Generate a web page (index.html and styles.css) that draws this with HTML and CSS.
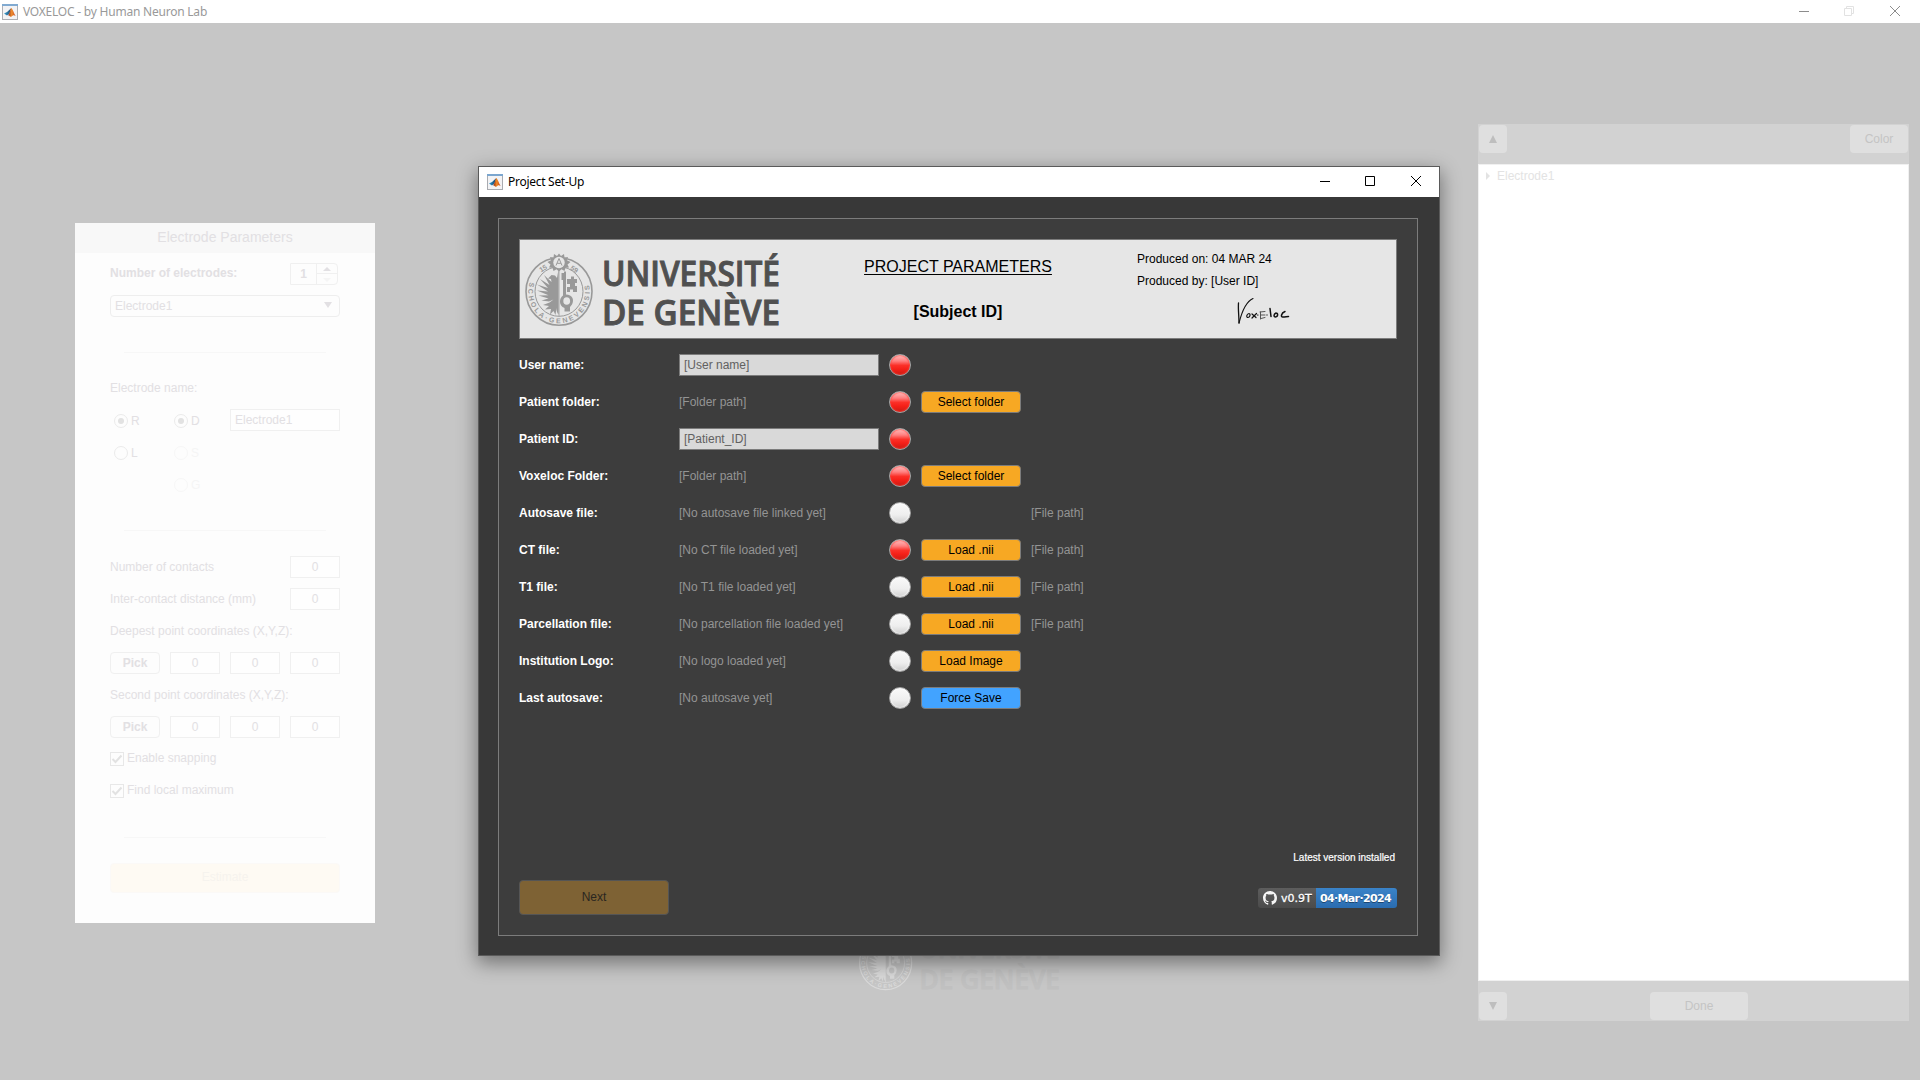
FILE: index.html
```html
<!DOCTYPE html>
<html lang="en">
<head>
<meta charset="utf-8">
<title>VOXELOC - by Human Neuron Lab</title>
<link rel="stylesheet" href="styles.css">
</head>
<body>
<svg width="0" height="0" class="defs">
  <defs>
    <linearGradient id="blueLeft"><stop offset="0" stop-color="#2b9bd0"/><stop offset="1" stop-color="#1d3f66"/></linearGradient>
    <linearGradient id="orangeRight"><stop offset="0" stop-color="#8a1f10"/><stop offset=".5" stop-color="#f08a24"/><stop offset="1" stop-color="#c33a12"/></linearGradient>
    <symbol id="matlab" viewBox="0 0 16 16">
      <rect x=".5" y=".5" width="15" height="15" fill="#f3f3f5" stroke="#a9abb0"/>
      <rect x="0" y="0" width="16" height="2" fill="#7ba6cf"/>
      <path d="M2 9.5 5 8 8 5.2 9.2 4.2 7.5 9.5 5 11.5Z" fill="url(#blueLeft)"/>
      <path d="M9.2 4C10.3 4.2 11.7 8.800 13.600 12 12 10.700 11 10.800 9.400 12.700 8.700 13.200 7.600 11.500 6 11.200 7.800 9.800 8.200 5.500 9.200 4Z" fill="url(#orangeRight)"/>
    </symbol>
    <path id="ringText" d="M5.700 31A30.800 31.500 0 1 0 64.300 31"/>
    <symbol id="unige" viewBox="0 0 256 76">
      <g class="seal" fill="none" stroke="currentColor">
        <ellipse cx="35" cy="40.500" rx="33" ry="33.800" stroke-width="1.600"/>
        <ellipse cx="35" cy="40.500" rx="24" ry="24.800" stroke-width="1"/>
        <g fill="currentColor" stroke="none">
          <path d="M34.600 18V63.500C33 62 32.500 60 32.500 57L31.500 64 29.500 60 26 63.500 27 58 21 58.500 25 55 19 54 25.500 51.500 29.500 48.500 25 50.500 17.500 49.500 24.500 47.500 14.500 44.500 24.500 44.300 13 39.500 24 40.500 13 33.500 24 37 16 28 25.500 34 20 24 27.500 31 27 28 24 27.500 27.500 24 31 24.500 33 27Z"/>
          <path d="M37.500 22H40V20.500H42V43.500C48.500 43.500 50.500 49 48 53.500L46 56V60.500H40.500V57C34.500 55 35 47 39 44.500V29H37.500Z"/>
          <path d="M43 28H47V25.500H50V28H53V32H51V35H53V41H49V38.500H46V41H43V36H46V33H43Z"/>
        </g>
        <ellipse cx="42.700" cy="50" rx="3.400" ry="3.800" fill="var(--seal-bg)" stroke="none"/>
        <path d="M35 17V65" stroke-width=".8"/>
        <path d="M35 2.500 37 5 40 3 40.500 6.500 44 6 43 9.300 46.500 11 43.500 13.500 45 16.500 41.500 16.800 40.500 20 37.500 18.200 35 20.500 32.500 18.200 29.500 20 28.500 16.800 25 16.500 26.500 13.500 23.500 11 27 9.300 26 6 29.500 6.500 30 3 33 5Z" fill="currentColor" stroke="none"/>
        <circle cx="35" cy="11.500" r="5.700" fill="var(--seal-bg)" stroke="none"/>
        <path d="M32 14.500 35 7.500 38 14.500M33.200 12.300H36.800" stroke-width="1"/>
      </g>
      <g class="seal-text" fill="currentColor">
        <text transform="rotate(-30 19 18)" x="15.500" y="20">15</text>
        <text transform="rotate(32 50 18)" x="46.500" y="20.500">59</text>
        <text><textPath href="#ringText" textLength="114">SCHOLA·GENEVENSIS</textPath></text>
      </g>
      <g class="logo-words">
        <text x="78" y="34.800" textLength="178" lengthAdjust="spacingAndGlyphs">UNIVERSITÉ</text>
        <text x="78" y="73.800" textLength="178" lengthAdjust="spacingAndGlyphs">DE GENÈVE</text>
      </g>
    </symbol>
  </defs>
</svg>

<header class="app-bar">
  <svg class="app-icon" width="16" height="16"><use href="#matlab"/></svg>
  <span class="app-title">VOXELOC - by Human Neuron Lab</span>
  <svg class="app-controls" width="102" height="20" fill="none" stroke="#8c8c8c">
    <path d="M0 9.500H10"/>
    <path d="M45.500 6.500H52.500V13.500H45.500ZM47.500 6.500V4.500H54.500V11.500H52.500" stroke="#e2e2e2"/>
    <path d="M91 4 101 14M101 4 91 14"/>
  </svg>
</header>

<main class="workspace">
  <section class="electrode-panel">
    <h2>Electrode Parameters</h2>
    <div class="fields">
      <div class="line"><b class="count-label">Number of electrodes:</b>
        <div class="spinner"><b>1</b><span class="steps"><i class="up"></i><i class="down"></i></span></div></div>
      <div class="select"><span>Electrode1</span><i></i></div>
      <hr class="after-select">
      <div class="line name-label">Electrode name:</div>
      <div class="name-grid">
        <label class="radio on"><i></i>R</label><label class="radio on"><i></i>D</label><div class="box name">Electrode1</div>
        <label class="radio"><i></i>L</label><label class="radio off"><i></i>S</label><span></span>
        <span></span><label class="radio off"><i></i>G</label><span></span>
      </div>
      <hr class="after-name">
      <div class="line">Number of contacts<div class="box">0</div></div>
      <div class="line">Inter-contact distance (mm)<div class="box">0</div></div>
      <div class="line">Deepest point coordinates (X,Y,Z):</div>
      <div class="line"><div class="pick">Pick</div><div class="box">0</div><div class="box">0</div><div class="box">0</div></div>
      <div class="line">Second point coordinates (X,Y,Z):</div>
      <div class="line"><div class="pick">Pick</div><div class="box">0</div><div class="box">0</div><div class="box">0</div></div>
      <label class="check"><svg width="14" height="14"><rect x=".5" y=".5" width="13" height="13"/><path d="M2.500 7 5.500 10 11.500 3.500"/></svg><span>Enable snapping</span></label>
      <label class="check"><svg width="14" height="14"><rect x=".5" y=".5" width="13" height="13"/><path d="M2.500 7 5.500 10 11.500 3.500"/></svg><span>Find local maximum</span></label>
      <hr class="after-checks">
      <div class="estimate">Estimate</div>
    </div>
  </section>

  <section class="tree-panel">
    <div class="tree-bar top"><div class="ghost square"><i class="up"></i></div><div class="ghost color">Color</div></div>
    <div class="tree"><i></i>Electrode1</div>
    <div class="tree-bar bottom"><div class="ghost square"><i class="down"></i></div><div class="ghost done">Done</div><span></span></div>
  </section>
</main>

<svg class="backdrop-logo" width="202" height="60" preserveAspectRatio="none"><use href="#unige"/></svg>

<section class="dialog">
  <header class="dialog-bar">
    <svg width="16" height="16"><use href="#matlab"/></svg>
    <span class="dialog-title">Project Set-Up</span>
    <svg class="dialog-controls" width="104" height="12" fill="none" stroke="#000">
      <path d="M0 6.500H10M45.500 1.500H54.500V10.500H45.500ZM91 1 101 11M101 1 91 11"/>
    </svg>
  </header>
  <div class="dialog-body">
    <div class="frame">
      <div class="banner">
        <svg class="logo" width="256" height="76"><use href="#unige"/></svg>
        <div class="heading"><u>PROJECT PARAMETERS</u><b>[Subject ID]</b></div>
        <div class="meta">
          <span>Produced on: 04 MAR 24</span>
          <span>Produced by: [User ID]</span>
          <svg class="signature" width="58" height="30" fill="none" stroke="#111" stroke-linecap="round">
            <path d="M3.500 6C3 12 4 19 4 26" stroke-width="1.300"/><path d="M4 26C6 18 10 5 18 1.500" stroke-width="1.100"/>
            <path d="M14 16.500C11.500 17 11 20.500 13 20.500 15.500 20 15.500 16.500 14 16.500M17 17 21 20.500M21.500 16.500 17 21M22.500 18H23" stroke-width="1.200"/>
            <path d="M25.500 15V22M25 15 30 14.500M26 18H30M26 21.500 30 20.500M31.500 18H32.500" stroke="#555"/>
            <path d="M35 11.500 36 19.500M41 16C38.500 17 38.500 20 40.500 20 43.500 19.500 43 16 41 16M50 14.500C46 16 45.500 20.500 48 20 50 20 52 19.500 53.500 19.500" stroke-width="1.500"/>
          </svg>
        </div>
      </div>

      <div class="form">
        <b>User name:</b><div class="input">[User name]</div><i class="led red"></i><span></span><span></span>
        <b>Patient folder:</b><span>[Folder path]</span><i class="led red"></i><button>Select folder</button><span></span>
        <b>Patient ID:</b><div class="input">[Patient_ID]</div><i class="led red"></i><span></span><span></span>
        <b>Voxeloc Folder:</b><span>[Folder path]</span><i class="led red"></i><button>Select folder</button><span></span>
        <b>Autosave file:</b><span>[No autosave file linked yet]</span><i class="led"></i><span></span><span>[File path]</span>
        <b>CT file:</b><span>[No CT file loaded yet]</span><i class="led red"></i><button>Load .nii</button><span>[File path]</span>
        <b>T1 file:</b><span>[No T1 file loaded yet]</span><i class="led"></i><button>Load .nii</button><span>[File path]</span>
        <b>Parcellation file:</b><span>[No parcellation file loaded yet]</span><i class="led"></i><button>Load .nii</button><span>[File path]</span>
        <b>Institution Logo:</b><span>[No logo loaded yet]</span><i class="led"></i><button>Load Image</button><span></span>
        <b>Last autosave:</b><span>[No autosave yet]</span><i class="led"></i><button class="blue">Force Save</button><span></span>
      </div>

      <div class="footer">
        <div class="next">Next</div>
        <div class="version">
          <span>Latest version installed</span>
          <div class="badge">
            <div class="badge-left"><svg width="14" height="14" viewBox="0 0 16 16"><path fill="#f5f5f5" d="M8 0C3.580 0 0 3.580 0 8c0 3.540 2.290 6.530 5.470 7.590.4.070.55-.17.55-.38 0-.19-.01-.82-.01-1.490-2.010.37-2.530-.49-2.690-.94-.09-.23-.48-.94-.82-1.130-.28-.15-.68-.52-.01-.53.63-.01 1.080.58 1.230.82.72 1.210 1.870.87 2.330.66.070-.52.28-.87.51-1.070-1.780-.2-3.640-.89-3.640-3.950 0-.87.31-1.590.82-2.150-.08-.2-.36-1.020.08-2.120 0 0 .67-.21 2.200.82.64-.18 1.320-.27 2-.27s1.360.09 2 .27c1.530-1.040 2.200-.82 2.200-.82.44 1.100.16 1.920.08 2.120.51.56.82 1.270.82 2.150 0 3.070-1.870 3.750-3.650 3.950.29.25.54.73.54 1.480 0 1.070-.01 1.930-.01 2.200 0 .21.15.46.55.38A8.010 8.010 0 0 0 16 8c0-4.420-3.580-8-8-8z"/></svg><span>v0.9T</span></div>
            <div class="badge-right">04·Mar·2024</div>
          </div>
        </div>
      </div>
    </div>
  </div>
</section>
</body>
</html>
```
FILE: styles.css
```css
* { box-sizing: border-box; }
body {
  margin: 0;
  width: 1920px;
  height: 1080px;
  overflow: hidden;
  background: #c6c6c6;
  font: 12px/14px "Liberation Sans", Arial, sans-serif;
}
.defs { position: absolute; }
h2, hr { margin: 0; border: 0; }

/* Main window */
.app-bar {
  display: flex;
  align-items: center;
  height: 23px;
  padding: 0 19px 0 2px;
  background: #fff;
}
.app-icon { opacity: .95; }
.app-title {
  flex: 1;
  margin-left: 5px;
  color: #999;
  font: 12px/20px "Noto Sans", "Open Sans", sans-serif;
  letter-spacing: -.22px;
}
.workspace { display: flex; justify-content: space-between; padding: 101px 11px 0 75px; }

/* Left panel */
.electrode-panel {
  width: 300px;
  height: 700px;
  margin-top: 99px;
  background: #fdfdfd;
  color: #e2e0e3;
}
.electrode-panel h2 {
  height: 30px;
  background: #f8f8f8;
  font-size: 14px;
  font-weight: 400;
  line-height: 29px;
  text-align: center;
}
.fields { display: flex; flex-direction: column; gap: 10px; padding: 10px 35px 0; }
.fields hr { height: 1px; margin: 0 14px; background: #f7f7f7; }
.fields hr.after-select { margin-top: 25px; margin-bottom: 14px; }
.fields hr.after-name { margin-top: 25px; margin-bottom: 15px; }
.fields hr.after-checks { margin-top: 25px; margin-bottom: 15px; }
.line { display: flex; align-items: center; justify-content: space-between; height: 22px; }
.count-label { padding-bottom: 2px; }
.box {
  width: 50px;
  height: 22px;
  border: 1px solid #f0f0f0;
  background: #fefefe;
  line-height: 20px;
  text-align: center;
}
.box.name { width: 110px; padding-left: 4px; text-align: left; }
.pick {
  width: 50px;
  height: 22px;
  border: 1px solid #f0f0f0;
  border-radius: 4px;
  font-weight: 700;
  line-height: 20px;
  text-align: center;
}
.spinner {
  display: flex;
  width: 48px;
  height: 22px;
  margin-right: 2px;
  border: 1px solid #f0f0f0;
  border-radius: 0 4px 4px 0;
}
.spinner b { width: 26px; line-height: 20px; text-align: center; border-right: 1px solid #f0f0f0; }
.steps { flex: 1; }
.steps i { display: block; height: 10px; }
.up::before, .down::before, .select i::before, .tree i {
  content: "";
  display: block;
  width: 8px;
  height: 4px;
  background: currentColor;
}
.up::before { clip-path: polygon(50% 0, 100% 100%, 0 100%); }
.down::before, .select i::before { clip-path: polygon(0 0, 100% 0, 50% 100%); }
.steps .up { padding: 3px 6px; border-bottom: 1px solid #f0f0f0; }
.steps .down { padding: 4px 6px; color: #f5f5f5; }
.select {
  display: flex;
  align-items: center;
  justify-content: space-between;
  height: 22px;
  padding: 0 7px 0 4px;
  border: 1px solid #eee;
  border-radius: 4px;
}
.select i::before { height: 6px; margin-top: -2px; }
.name-grid { display: grid; grid-template-columns: 60px 60px 110px; grid-auto-rows: 22px; row-gap: 10px; }
.radio { display: flex; align-items: center; gap: 3px; padding: 2px 0 0 4px; }
.radio i {
  display: grid;
  place-items: center;
  width: 14px;
  height: 14px;
  border: 1px solid #ebebeb;
  border-radius: 50%;
}
.radio.on i::before { content: ""; width: 6px; height: 6px; border-radius: 50%; background: #e2e2e2; }
.radio.off { color: #f5f5f5; }
.radio.off i { border-color: #f7f7f7; }
.check { display: flex; gap: 3px; height: 22px; padding-top: 4px; }
.check span { line-height: 13px; }
.check rect { fill: none; stroke: #e8e8e8; }
.check path { fill: none; stroke: #e2e2e2; stroke-width: 2; }
.estimate {
  height: 30px;
  border: 1px solid #fbf9f7;
  border-radius: 4px;
  background: #fefaf3;
  color: #f6f3ee;
  line-height: 27px;
  text-align: center;
}

/* Right panel */
.tree-panel {
  display: flex;
  flex-direction: column;
  width: 431px;
  height: 897px;
  background: #d2d2d2;
  color: #c4c4c4;
}
.tree-bar { display: flex; justify-content: space-between; height: 40px; padding: 1px; }
.tree-bar.bottom { align-items: flex-end; }
.tree-bar.bottom > span { width: 28px; }
.ghost { height: 28px; border-radius: 4px; background: #dfdfdf; line-height: 28px; text-align: center; }
.ghost.color { width: 58px; }
.ghost.done { width: 98px; margin-left: 11px; margin-right: auto; }
.tree-bar.bottom .square { margin-right: 132px; }
.ghost.square { display: grid; place-items: center; width: 28px; }
.ghost.square i::before { height: 8px; color: #bebebe; background: #bebebe; }
.tree {
  display: flex;
  gap: 7px;
  flex: 1;
  padding: 4px 7px;
  border: 1px solid #f0f0f0;
  background: #fff;
  color: #e3e3e3;
}
.tree i { height: 8px; width: 4px; margin-top: 3px; clip-path: polygon(0 0, 100% 50%, 0 100%); }

/* University logo */
.logo-words text { fill: var(--word); font: 600 34.500px "Open Sans", "Noto Sans", sans-serif; stroke: var(--word); stroke-width: 1px; }
.seal-text text { font: 700 7px "Liberation Sans", sans-serif; }
.backdrop-logo {
  --word: #c0c0c0;
  --seal-bg: #c6c6c6;
  position: absolute;
  left: 858px;
  top: 931px;
  color: #dadada;
}

/* Dialog window */
.dialog {
  position: absolute;
  left: 478px;
  top: 166px;
  display: flex;
  flex-direction: column;
  width: 962px;
  height: 790px;
  border: 1px solid #5a5a5a;
  background: #383838;
  box-shadow: 0 6px 18px 1px rgba(0, 0, 0, .42);
}
.dialog-bar { display: flex; align-items: center; height: 30px; padding: 0 15px 0 8px; background: #fff; }
.dialog-controls { margin-bottom: 2px; }
.dialog-title {
  flex: 1;
  margin-left: 5px;
  color: #000;
  font: 12px/20px "Noto Sans", "Open Sans", sans-serif;
  letter-spacing: -.28px;
}
.dialog-body { flex: 1; padding: 21px 21px 19px 19px; }
.frame {
  display: flex;
  flex-direction: column;
  height: 100%;
  padding: 20px;
  border: 1px solid #7c7c7c;
  background: #3d3d3d;
}
.banner { display: flex; width: 878px; height: 100px; border: 1px solid #7c7c7c; background: #e6e6e6; }
.logo { --word: #505050; --seal-bg: #e6e6e6; margin: 11px 0 0 4px; color: #999; }
.heading {
  display: flex;
  flex-direction: column;
  align-items: center;
  gap: 27px;
  width: 190px;
  margin-left: 83px;
  padding-top: 18px;
  font-size: 16px;
  line-height: 18px;
}
.heading u { text-decoration-thickness: 1px; text-underline-offset: 2px; white-space: nowrap; }
.meta { display: flex; flex-direction: column; gap: 8px; margin-left: 84px; padding-top: 12px; }
.signature { margin: 1px 0 0 98px; }
.form {
  display: grid;
  grid-template-columns: 160px 210px 32px 110px 1fr;
  grid-auto-rows: 22px;
  row-gap: 15px;
  padding-top: 15px;
  color: #949494;
  line-height: 22px;
}
.form b { color: #fff; }
.input { width: 200px; padding-left: 4px; border: 1px solid #7c7c7c; background: #d9d9d9; color: #616161; line-height: 20px; }
.led {
  width: 22px;
  height: 22px;
  border: 1px solid #a5a5a5;
  border-radius: 50%;
  background: linear-gradient(#fafafa 0, #eee 60%, #d0d0d0 100%);
  box-shadow: inset 0 0 1px 1px rgba(255, 255, 255, .5);
}
.led.red {
  background: linear-gradient(#ffc0c0 0, #ff8080 30%, #fb3028 52%, #f52018 70%, #c81c14 100%);
  box-shadow: inset 0 0 1px 1px rgba(255, 60, 50, .5);
}
button {
  width: 100px;
  height: 22px;
  padding: 0;
  border: 1px solid #7c7c7c;
  border-radius: 4px;
  background: #f7a823;
  color: #000;
  font: inherit;
  line-height: 20px;
}
button.blue { background: #42a3ff; }
.footer { display: flex; align-items: flex-end; justify-content: space-between; margin-top: auto; }
.next {
  width: 150px;
  height: 35px;
  border: 1px solid #555;
  border-radius: 4px;
  background: #7e6234;
  color: #2a2620;
  line-height: 32px;
  text-align: center;
}
.version { display: flex; flex-direction: column; align-items: flex-end; gap: 23px; padding-bottom: 7px; color: #fff; }
.version > span { padding-right: 2px; font-size: 10px; -webkit-text-stroke: .2px #fff; }
.badge {
  display: flex;
  width: 139px;
  height: 20px;
  overflow: hidden;
  border-radius: 3px;
  font: 11px/21px "DejaVu Sans", sans-serif;
  text-shadow: 0 1px rgba(0, 0, 0, .4);
}
.badge-left { display: flex; align-items: center; gap: 4px; width: 58px; padding-left: 5px; background: linear-gradient(#5d5d5d, #4b4b4b); -webkit-text-stroke: .3px #fff; }
.badge-right { width: 81px; padding-left: 4px; background: linear-gradient(#3a83c8, #2a6cb0); font-weight: 700; letter-spacing: -.65px; }
```
